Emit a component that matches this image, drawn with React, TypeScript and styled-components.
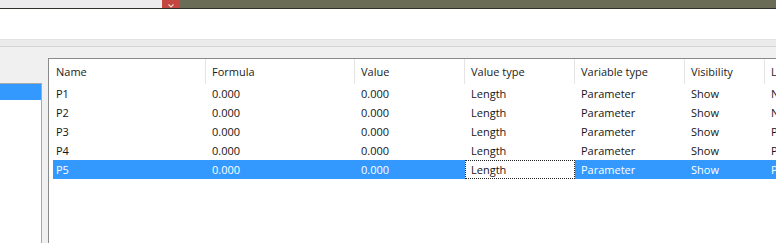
import React from "react";
import styled, { createGlobalStyle } from "styled-components";

const Global = createGlobalStyle`
  html, body { margin: 0; padding: 0; background: #f0f0f0; }
  body { font-family: "Open Sans", "Noto Sans", sans-serif; font-size: 11px; color: #111; }
  #root { width: 776px; height: 243px; overflow: hidden; }
`;

const Page = styled.div`
  width: 776px;
  height: 243px;
  display: flex;
  flex-direction: column;
  overflow: hidden;
  background: #f0f0f0;
`;

const TitleStrip = styled.div`
  height: 8px;
  display: flex;
  border-bottom: 1px solid #2e2f28;
  flex-shrink: 0;
`;

const TitleLeft = styled.div`
  width: 162px;
  background: #ececec;
`;

const CloseTab = styled.div`
  width: 18px;
  background: #c3463f;
  display: flex;
  align-items: flex-end;
  justify-content: center;
`;

const TitleRest = styled.div`
  flex: 1;
  background: #6b6c56;
`;

const Ribbon = styled.div`
  height: 30px;
  background: #ffffff;
  flex-shrink: 0;
`;

const RibbonEdge = styled.div`
  height: 6px;
  background: #ebebeb;
  border-top: 1px solid #e2e2e2;
  border-bottom: 1px solid #d4d4d4;
  flex-shrink: 0;
`;

const Main = styled.div`
  flex: 1;
  display: flex;
  align-items: flex-start;
  gap: 6px;
  min-height: 0;
`;

const SideList = styled.div`
  width: 41px;
  height: 200px;
  margin-top: 36px;
  background: #ffffff;
  border-top: 1px solid #a9a9a9;
  border-right: 1px solid #a9a9a9;
  flex-shrink: 0;
`;

const SideItem = styled.div<{ $selected?: boolean }>`
  height: 16px;
  background: ${(p) => (p.$selected ? "#3399ff" : "transparent")};
`;

const TablePanel = styled.div`
  flex: 1;
  margin-top: 11px;
  height: 200px;
  background: #ffffff;
  border-top: 1px solid #8a8a8a;
  border-left: 1px solid #8a8a8a;
  padding-left: 4px;
  overflow: hidden;
`;

const cols = [153, 149, 110, 110, 110, 80, 60];

const HeaderRow = styled.div`
  display: flex;
  height: 25px;
  align-items: stretch;
`;

const HeaderCell = styled.div<{ $w: number; $pad: number; $sep: boolean }>`
  width: ${(p) => p.$w}px;
  flex-shrink: 0;
  box-sizing: border-box;
  padding-left: ${(p) => p.$pad}px;
  display: flex;
  align-items: center;
  border-right: ${(p) => (p.$sep ? "1px solid #e5e5e5" : "none")};
  white-space: nowrap;
  color: #1b1b1b;
`;

const Row = styled.div<{ $selected?: boolean }>`
  display: flex;
  height: 19px;
  background: ${(p) => (p.$selected ? "#3399ff" : "transparent")};
  color: ${(p) => (p.$selected ? "#ffffff" : "#151515")};
`;

const Cell = styled.div<{ $w: number; $pad: number; $focus?: boolean }>`
  width: ${(p) => p.$w}px;
  flex-shrink: 0;
  box-sizing: border-box;
  padding-left: ${(p) => p.$pad}px;
  display: flex;
  align-items: center;
  white-space: nowrap;
  ${(p) =>
    p.$focus
      ? `background: #ffffff; color: #151515; border: 1px dotted #222; padding-left: ${p.$pad - 1}px;`
      : ""}
`;

const headers = ["Name", "Formula", "Value", "Value type", "Variable type", "Visibility", "L"];

const rows = [
  ["P1", "0.000", "0.000", "Length", "Parameter", "Show", "N"],
  ["P2", "0.000", "0.000", "Length", "Parameter", "Show", "N"],
  ["P3", "0.000", "0.000", "Length", "Parameter", "Show", "P"],
  ["P4", "0.000", "0.000", "Length", "Parameter", "Show", "P"],
  ["P5", "0.000", "0.000", "Length", "Parameter", "Show", "P"],
];

export default function App() {
  return (
    <Page>
      <Global />
      <TitleStrip>
        <TitleLeft />
        <CloseTab>
          <svg width="6" height="4" viewBox="0 0 6 4">
            <path d="M0.5 0.5 L3 3 L5.5 0.5" stroke="#f3d6d4" strokeWidth="1.2" fill="none" />
          </svg>
        </CloseTab>
        <TitleRest />
      </TitleStrip>
      <Ribbon />
      <RibbonEdge />
      <Main>
        <SideList>
          <SideItem $selected />
        </SideList>
        <TablePanel>
          <HeaderRow>
            {headers.map((h, i) => (
              <HeaderCell key={h} $w={cols[i]} $pad={i === 0 ? 3 : 6} $sep={i < headers.length - 1}>
                {h}
              </HeaderCell>
            ))}
          </HeaderRow>
          {rows.map((r, ri) => {
            const sel = ri === rows.length - 1;
            return (
              <Row key={r[0]} $selected={sel}>
                {r.map((c, ci) => (
                  <Cell key={ci} $w={cols[ci]} $pad={ci === 0 ? 3 : 6} $focus={sel && ci === 3}>
                    {c}
                  </Cell>
                ))}
              </Row>
            );
          })}
        </TablePanel>
      </Main>
    </Page>
  );
}
